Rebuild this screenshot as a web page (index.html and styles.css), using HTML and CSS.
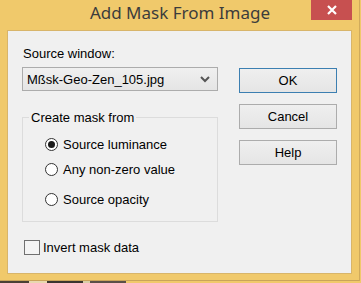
FILE: index.html
```html
<!DOCTYPE html>
<html lang="en">
<head>
  <meta charset="UTF-8" />
  <title>Add Mask From Image</title>
  <link rel="stylesheet" href="styles.css">
</head>
<body>
  <div class="window">
    <div class="titlebar">
      <span></span>
      <span class="title">Add Mask From Image</span>
      <span class="close">
        <svg width="12" height="10" viewBox="0 0 12 10"><path d="M2 1 L10 9 M10 1 L2 9" stroke="#fff" stroke-width="2.2" fill="none"/></svg>
      </span>
    </div>
    <div class="client">
      <div class="left">
        <div class="label">Source window:</div>
        <div class="combo">
          <span>Mßsk-Geo-Zen_105.jpg</span>
          <svg width="12" height="8" viewBox="0 0 12 8"><path d="M2 2 L6 6 L10 2" stroke="#555" stroke-width="2" fill="none"/></svg>
        </div>
        <fieldset class="group">
          <legend>Create mask from</legend>
          <div class="radio r1"><span class="dot on"></span>Source luminance</div>
          <div class="radio r2"><span class="dot"></span>Any non-zero value</div>
          <div class="radio r3"><span class="dot"></span>Source opacity</div>
        </fieldset>
        <div class="check"><span class="box"></span>Invert mask data</div>
      </div>
      <div class="buttons">
        <div class="btn default">OK</div>
        <div class="btn">Cancel</div>
        <div class="btn">Help</div>
      </div>
    </div>
  </div>
  <div class="behind"></div>
</body>
</html>
```

FILE: styles.css
```css
body {
  margin: 0;
  width: 361px;
  height: 283px;
  overflow: hidden;
  background: #f0c96b;
  font-family: "Liberation Sans", Arial, sans-serif;
  font-size: 13px;
  color: #000;
}
.window {
  width: 360px;
  height: 281px;
  background: #f0c96b;
  border-right: 1px solid #d0ab5c;
  box-sizing: border-box;
  border-bottom: 1px solid #c9a45a;
}
.titlebar {
  height: 30px;
  display: grid;
  grid-template-columns: 1fr auto 1fr;
  align-items: start;
}
.title {
  font-family: "Noto Sans", "Open Sans", sans-serif;
  font-size: 17px;
  color: #3c3c3c;
  line-height: 24px;
  padding-top: 1px;
  padding-left: 1px;
}
.close {
  justify-self: end;
  margin-right: 7px;
  width: 41px;
  height: 20px;
  background: #c75050;
  display: flex;
  align-items: center;
  justify-content: center;
}
.client {
  margin: 0 7px;
  height: 244px;
  box-sizing: border-box;
  border: 1px solid #d8b56a;
  background: #f0f0f0;
  display: flex;
  padding: 14px 0 0 14px;
}
.left {
  width: 196px;
}
.label {
  height: 15px;
  line-height: 15px;
  padding-left: 1px;
  margin-top: 1px;
}
.combo {
  margin-top: 6px;
  height: 24px;
  box-sizing: border-box;
  border: 1px solid #acacac;
  background: linear-gradient(#f0f0f0, #e5e5e5);
  display: flex;
  align-items: center;
  justify-content: space-between;
  padding: 0 6px 0 4px;
}
.group {
  margin: 19px 0 0 0;
  padding: 0;
  height: 112px;
  box-sizing: border-box;
  border: 1px solid #dcdcdc;
  min-width: 0;
}
.group legend {
  margin-left: 6px;
  padding: 0 2px;
  line-height: 15px;
}
.radio {
  display: flex;
  align-items: center;
  height: 15px;
  line-height: 15px;
  padding-left: 22px;
}
.r1 { margin-top: 12px; }
.r2 { margin-top: 10px; }
.r3 { margin-top: 15px; }
.dot {
  width: 13px;
  height: 13px;
  box-sizing: border-box;
  border: 1px solid #333;
  border-radius: 50%;
  background: #fff;
  margin-right: 5px;
  display: flex;
  align-items: center;
  justify-content: center;
}
.dot.on::after {
  content: "";
  width: 7px;
  height: 7px;
  border-radius: 50%;
  background: #1a1a1a;
}
.check {
  margin-top: 17px;
  display: flex;
  align-items: center;
  height: 16px;
  padding-left: 2px;
}
.box {
  width: 16px;
  height: 15px;
  box-sizing: border-box;
  border: 1px solid #707070;
  background: #f4f4f4;
  margin-right: 3px;
}
.buttons {
  margin-left: 21px;
  padding-top: 23px;
  display: flex;
  flex-direction: column;
  gap: 11px;
}
.btn {
  width: 98px;
  height: 25px;
  box-sizing: border-box;
  border: 1px solid #acacac;
  background: linear-gradient(#efefef, #e5e5e5);
  display: flex;
  align-items: center;
  justify-content: center;
}
.btn.default {
  border-color: #3c7fb1;
}
.behind {
  height: 2px;
  background: linear-gradient(90deg, #4a4035 0 8%, #e8d8b0 8% 13%, #3a3530 13% 23%, #d8cfa8 23% 25%, #5a5048 25% 35%, #f0c96b 35%);
}
```
